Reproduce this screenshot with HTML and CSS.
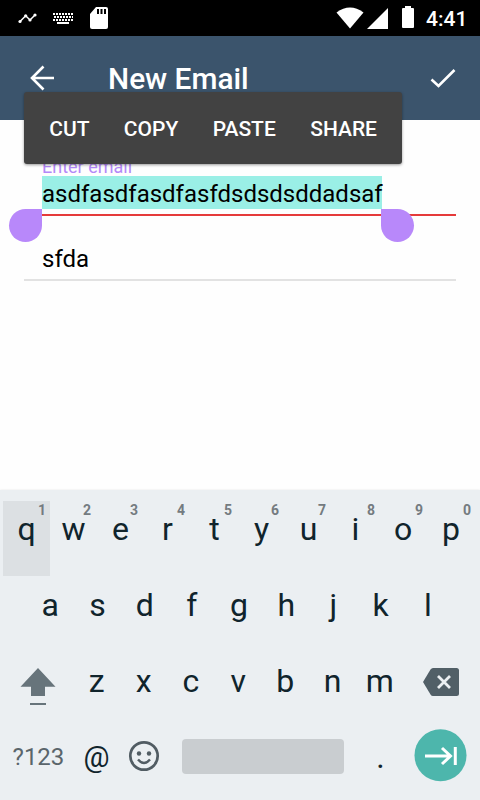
FILE: index.html
```html
<!DOCTYPE html>
<html lang="en">
<head>
<meta charset="utf-8">
<title>New Email</title>
<link rel="stylesheet" href="styles.css">
</head>
<body>
<div class="screen">
  <header class="status">
    <svg class="status-left" width="120" height="36" viewBox="0 0 120 36" fill="#fff">
      <path d="M20 21.500L25.700 15.800L30 20L35 15" fill="none" stroke="#fff" stroke-width="1.500"/>
      <circle cx="20" cy="21.500" r="1.600"/><circle cx="25.700" cy="15.800" r="1.600"/><circle cx="30" cy="20" r="1.600"/><circle cx="35" cy="15" r="1.600"/>
      <path d="M53 14H73M53 20H73" fill="none" stroke="#fff" stroke-width="2" stroke-dasharray="2 1"/>
      <path d="M54 17H73" fill="none" stroke="#fff" stroke-width="2" stroke-dasharray="2 1"/>
      <path d="M57 23H69" fill="none" stroke="#fff" stroke-width="2"/>
      <path d="M96 7H106Q108 7 108 9V27Q108 29 106 29H92Q90 29 90 27V14Z"/>
      <path d="M97 9H99V14H97ZM100.500 9H102.500V14H100.500ZM104 9H106V14H104Z" fill="#000"/>
    </svg>
    <svg class="status-right" width="84" height="36" viewBox="336 0 84 36" fill="#fff">
      <path d="M336.500 12.500Q350 2.500 363.500 12.500L350 28.500Z"/>
      <path d="M388 8V29H367Z"/>
      <path d="M405 6H411V8H413Q414 8 414 9V27Q414 28 413 28H403Q402 28 402 27V9Q402 8 403 8H405Z"/>
    </svg>
    <span class="clock">4:41</span>
  </header>

  <nav class="appbar">
    <svg width="84" height="84" viewBox="0 36 84 84" fill="none" stroke="#fff" stroke-width="2.600"><path d="M54 78H32M43.500 66.500L32 78L43.500 89.500"/></svg>
    <h1>New Email</h1>
    <svg class="done" width="60" height="84" viewBox="420 36 60 84" fill="none" stroke="#fff" stroke-width="2.600"><path d="M431.500 79.500L438.500 86L454.500 70"/></svg>
  </nav>

  <main class="form">
    <div class="field error">
      <label>Enter email</label>
      <div class="value"><span class="selection">asdfasdfasdfasfdsdsdsddadsaf<i class="handle start"></i><i class="handle end"></i></span></div>
    </div>
    <div class="field second"><div class="value">sfda</div></div>
  </main>

  <div class="menu"><span>CUT</span><span>COPY</span><span>PASTE</span><span>SHARE</span></div>

  <section class="keyboard">
    <div class="row first">
      <div class="key pressed">q<sup>1</sup></div><div class="key">w<sup>2</sup></div><div class="key">e<sup>3</sup></div><div class="key">r<sup>4</sup></div><div class="key">t<sup>5</sup></div><div class="key">y<sup>6</sup></div><div class="key">u<sup>7</sup></div><div class="key">i<sup>8</sup></div><div class="key">o<sup>9</sup></div><div class="key">p<sup>0</sup></div>
    </div>
    <div class="row middle">
      <div class="key">a</div><div class="key">s</div><div class="key">d</div><div class="key">f</div><div class="key">g</div><div class="key">h</div><div class="key">j</div><div class="key">k</div><div class="key">l</div>
    </div>
    <div class="row third">
      <svg class="side" width="70" height="76" viewBox="3 653 70 76" fill="#67747b"><path d="M38 668L55.500 686.700H45V696H31V686.700H20.500ZM30 703H46V705H30Z"/></svg>
      <div class="key">z</div><div class="key">x</div><div class="key">c</div><div class="key">v</div><div class="key">b</div><div class="key">n</div><div class="key">m</div>
      <svg class="side" width="72" height="76" viewBox="405 653 72 76"><path d="M433 668H456.500Q459 668 459 670.500V693.500Q459 696 456.500 696H433Q431.500 696 430.500 694.500L423 682L430.500 669.500Q431.500 668 433 668Z" fill="#515f67"/><path d="M438 676L450 688M450 676L438 688" stroke="#ebeff2" stroke-width="2.800"/></svg>
    </div>
    <div class="row bottom">
      <div class="symbols">?123</div>
      <div class="key at">@</div>
      <svg class="emoji" width="48" height="71" viewBox="120 729 48 71" fill="none" stroke="#515c63"><circle cx="144" cy="756" r="13.700" stroke-width="2.700"/><path d="M138 759.500Q144 766.500 150 759.500" stroke-width="2.400"/><circle cx="139" cy="753.500" r="2.200" fill="#515c63" stroke="none"/><circle cx="149" cy="753.500" r="2.200" fill="#515c63" stroke="none"/></svg>
      <div class="space"></div>
      <div class="key dot">.</div>
      <svg class="next" width="76" height="71" viewBox="404 729 76 71"><circle cx="440.500" cy="755.300" r="26" fill="#4db6ac"/><path d="M425 756H451M442 748L450.500 756L442 764M455.300 747V765" fill="none" stroke="#fff" stroke-width="3"/></svg>
    </div>
  </section>
</div>
</body>
</html>
```

FILE: styles.css
```css
* { box-sizing: border-box; }
body { margin: 0; font-family: Roboto, sans-serif; background: #fff; }
svg { display: block; flex: none; }
.screen { position: relative; width: 480px; height: 800px; display: flex; flex-direction: column; overflow: hidden; background: #fefefe; }
.status { height: 36px; flex: none; display: flex; background: #000; color: #fff; }
.status-right { margin-left: 216px; }
.clock { margin-left: 6px; font-size: 21px; font-weight: 500; line-height: 38px; }
.appbar { height: 84px; flex: none; display: flex; background: #3b546c; color: #fff; }
.appbar h1 { margin: 0 0 0 24px; font-size: 29.800px; font-weight: 500; line-height: 86px; white-space: nowrap; }
.done { margin-left: auto; }
.form { flex: 1; padding: 36px 24px 0; }
.field { padding-left: 18px; border-bottom: 2px solid #e2e2e2; }
.field.error { height: 60px; border-color: #e53a3a; }
.field label { display: block; height: 20px; font-size: 18px; line-height: 21px; color: #b488f8; }
.value { height: 33px; font-size: 24px; line-height: 37px; color: #000; }
.selection { position: relative; display: block; height: 33px; width: 340px; background: #9aefe6; white-space: nowrap; }
.handle { position: absolute; top: 33px; width: 33px; height: 33px; background: #b888fa; }
.handle.start { left: -33px; border-radius: 50% 0 50% 50%; }
.handle.end { left: 339px; border-radius: 0 50% 50% 50%; }
.field.second { height: 65px; padding-top: 25px; }
.menu { position: absolute; left: 24px; top: 92px; width: 378px; height: 72px; display: flex; gap: 34.400px; padding-left: 25.200px; border-radius: 3px; background: #424242; color: #fff; font-size: 21px; font-weight: 500; line-height: 74px; box-shadow: 0 1px 3px rgba(0, 0, 0, .4); }
.keyboard { height: 310px; flex: none; padding: 11px 3px 0; background: #ebeff2; color: #10242c; box-shadow: 0 0 2px rgba(0, 0, 0, .1); }
.row { display: flex; height: 76px; }
.middle { padding-left: 23.700px; }
.key { position: relative; flex: none; width: 47.200px; height: 75px; text-align: center; font-size: 32px; line-height: 56px; }
.first .key { width: 47px; }
.first .key:nth-child(n+9) { width: 48px; }
.pressed { background: #dce0e3; }
.key sup { position: absolute; top: 0; right: 6px; font-size: 14px; font-weight: 700; line-height: 19px; color: #747b80; }
.key.pressed sup, .key:nth-child(n+8) sup { right: 4px; }
.third .side:last-child { margin-left: auto; }
.symbols { width: 70px; padding-left: 1px; text-align: center; font-size: 24px; line-height: 56px; color: #5a656b; }
.key.at { font-size: 29px; }
.space { width: 162px; height: 35px; margin: 10px 13px 0 14px; border-radius: 4px; background: #c9cdd0; }
.bottom .next { margin-right: -3px; margin-left: auto; }
```
